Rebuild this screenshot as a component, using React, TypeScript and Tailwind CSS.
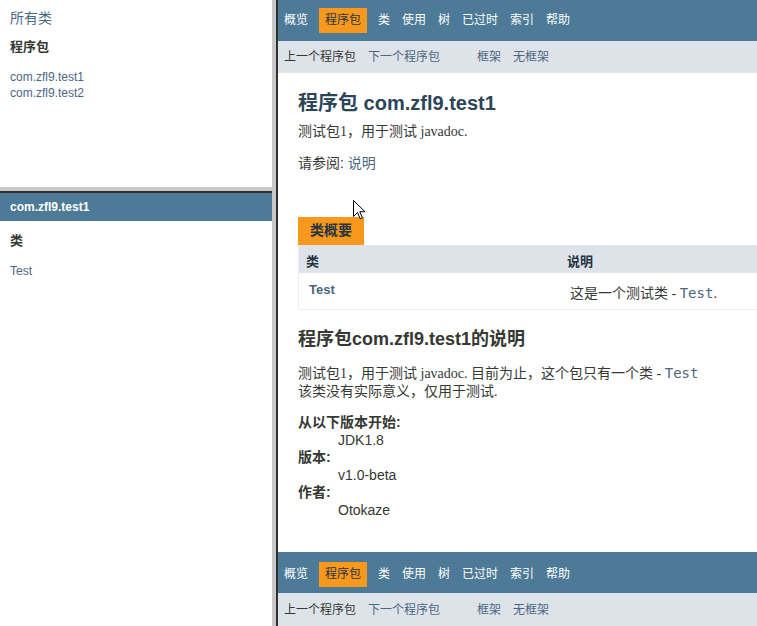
const sans = "font-['Liberation_Sans','Noto_Sans_CJK_SC',sans-serif]"
const serif = "font-['Liberation_Serif','Noto_Sans_CJK_SC',serif]"
const mono = "font-['DejaVu_Sans_Mono',monospace]"

const navItems = ['概览', '程序包', '类', '使用', '树', '已过时', '索引', '帮助']

function NavBar({ bottom }: { bottom?: boolean }) {
  return (
    <div>
      <div className={`flex h-[41px] items-start bg-[#4d7a97] text-[12px] ${bottom ? 'pt-[10px]' : 'pt-[8px]'}`}>
        {navItems.map((item) =>
          item === '程序包' ? (
            <span key={item} className="mx-[5px] bg-[#f8981d] px-[6px] py-[5px] leading-[15px] text-[#253441]">
              {item}
            </span>
          ) : (
            <span key={item} className="px-[6px] py-[5px] leading-[15px] text-white">
              {item}
            </span>
          )
        )}
      </div>
      <div className={`flex items-center bg-[#dee3e9] text-[12px] leading-[16px] ${bottom ? 'h-[33px]' : 'h-[32px]'}`}>
        <span className="px-[6px] text-[#353833]">上一个程序包</span>
        <span className="px-[6px] text-[#4a6782]">下一个程序包</span>
        <span className="ml-[25px] px-[6px] text-[#4a6782]">框架</span>
        <span className="px-[6px] text-[#4a6782]">无框架</span>
      </div>
    </div>
  )
}

function Cursor() {
  return (
    <svg className="absolute left-[353px] top-[200px]" width="13" height="20" viewBox="0 0 13 20">
      <path d="M0.5 0.5 L0.5 16.5 L4.5 12.5 L7.2 18.8 L9.4 17.9 L6.8 11.7 L12 11.7 Z" fill="#fff" stroke="#000" strokeWidth="1" />
    </svg>
  )
}

export default function App() {
  return (
    <div className={`relative flex h-[626px] w-[757px] overflow-hidden bg-white text-[#353833] ${sans}`}>
      {/* left frames */}
      <div className="flex w-[272px] shrink-0 flex-col">
        <div className="h-[187px] px-[10px] pt-[9px]">
          <div className="text-[14px] leading-[18px] text-[#4a6782]">所有类</div>
          <h2 className="mt-[12px] text-[13px] font-bold leading-[16px]">程序包</h2>
          <ul className="mt-[14px] text-[12px] leading-[16px] text-[#4a6782]">
            <li>com.zfl9.test1</li>
            <li>com.zfl9.test2</li>
          </ul>
        </div>
        <div className="h-[4px] bg-[#c8c8c8]" />
        <div className="h-[2px] bg-[#303030]" />
        <div className="flex-1">
          <div className="flex h-[28px] items-center bg-[#4d7a97] pl-[10px] text-[12px] font-bold text-white">
            com.zfl9.test1
          </div>
          <h2 className="mt-[12px] pl-[10px] text-[13px] font-bold leading-[16px]">类</h2>
          <div className="mt-[14px] pl-[10px] text-[12px] leading-[16px] text-[#4a6782]">Test</div>
        </div>
      </div>
      <div className="w-[4px] shrink-0 bg-[#c8c8c8]" />
      <div className="w-[2px] shrink-0 bg-[#303030]" />

      {/* right frame */}
      <div className="flex-1 overflow-hidden">
        <div className="w-[560px]">
          <NavBar />
          <div className="h-[479px] px-[20px] pt-[18px]">
            <h1 className="text-[20px] font-bold leading-[24px] text-[#2c4557]">程序包 com.zfl9.test1</h1>
            <p className={`mt-[8px] text-[14px] leading-[18px] ${serif}`}>测试包1，用于测试 javadoc.</p>
            <p className="mt-[13px] text-[14px] leading-[18px]">
              请参阅: <span className="text-[#4a6782]">说明</span>
            </p>

            <div className="mt-[45px]">
              <div className="h-[28px] w-fit bg-[#f8981d] px-[12px] pt-[5px] text-[14px] font-bold leading-[16px] text-[#253441]">
                类概要
              </div>
              <div className="grid h-[28px] grid-cols-[261px_1fr] border-l border-[#eeeeee] bg-[#dee3e9] text-[13px] font-bold leading-[17px] text-[#253441]">
                <div className="pl-[7px] pt-[8px]">类</div>
                <div className="pl-[7px] pt-[8px]">说明</div>
              </div>
              <div className="grid h-[37px] grid-cols-[261px_1fr] border-b border-l border-[#eeeeee]">
                <div className="pl-[10px] pt-[8px] text-[13px] font-bold leading-[17px] text-[#4a6782]">Test</div>
                <div className={`pl-[10px] pt-[11px] text-[14px] leading-[18px] ${serif}`}>
                  这是一个测试类 - <span className={`${mono} text-[#4a6782]`}>Test</span>.
                </div>
              </div>
            </div>

            <h2 className="mt-[18px] text-[18px] font-bold leading-[22px]">程序包com.zfl9.test1的说明</h2>
            <div className={`mt-[14px] text-[14px] leading-[18px] ${serif}`}>
              测试包1，用于测试 javadoc. 目前为止，这个包只有一个类 - <span className={`${mono} text-[#4a6782]`}>Test</span>
              <br />
              该类没有实际意义，仅用于测试.
            </div>
            <dl className="mt-[13px] text-[14px] leading-[17.6px]">
              <dt className="font-bold">从以下版本开始:</dt>
              <dd className="ml-[40px]">JDK1.8</dd>
              <dt className="font-bold">版本:</dt>
              <dd className="ml-[40px]">v1.0-beta</dd>
              <dt className="font-bold">作者:</dt>
              <dd className="ml-[40px]">Otokaze</dd>
            </dl>
          </div>
          <NavBar bottom />
        </div>
      </div>
      <Cursor />
    </div>
  )
}
